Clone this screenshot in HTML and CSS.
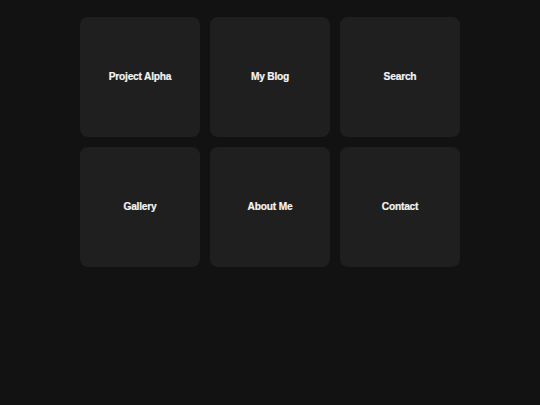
FILE: index.html
```html
<!DOCTYPE html>
<html>
<head>
<meta charset="utf-8">
<link rel="stylesheet" href="styles.css">
</head>
<body>
<div class="grid">
  <div class="card">Project Alpha</div>
  <div class="card">My Blog</div>
  <div class="card">Search</div>
  <div class="card">Gallery</div>
  <div class="card">About Me</div>
  <div class="card">Contact</div>
</div>
</body>
</html>
```
FILE: styles.css
```css
html, body {
  margin: 0;
  background: #121212;
}
body {
  padding-top: 17px;
  font-family: "Liberation Sans", Arial, sans-serif;
}
.grid {
  display: grid;
  grid-template-columns: repeat(3, 120px);
  grid-auto-rows: 120px;
  gap: 10px;
  justify-content: center;
}
.card {
  background: #1f1f1f;
  border-radius: 8px;
  display: flex;
  align-items: center;
  justify-content: center;
  padding-bottom: 2px;
  box-sizing: border-box;
  color: #f4f4f4;
  font-weight: bold;
  font-size: 10.2px;
  letter-spacing: -0.2px;
  -webkit-text-stroke: 0.2px #f4f4f4;
}
```
